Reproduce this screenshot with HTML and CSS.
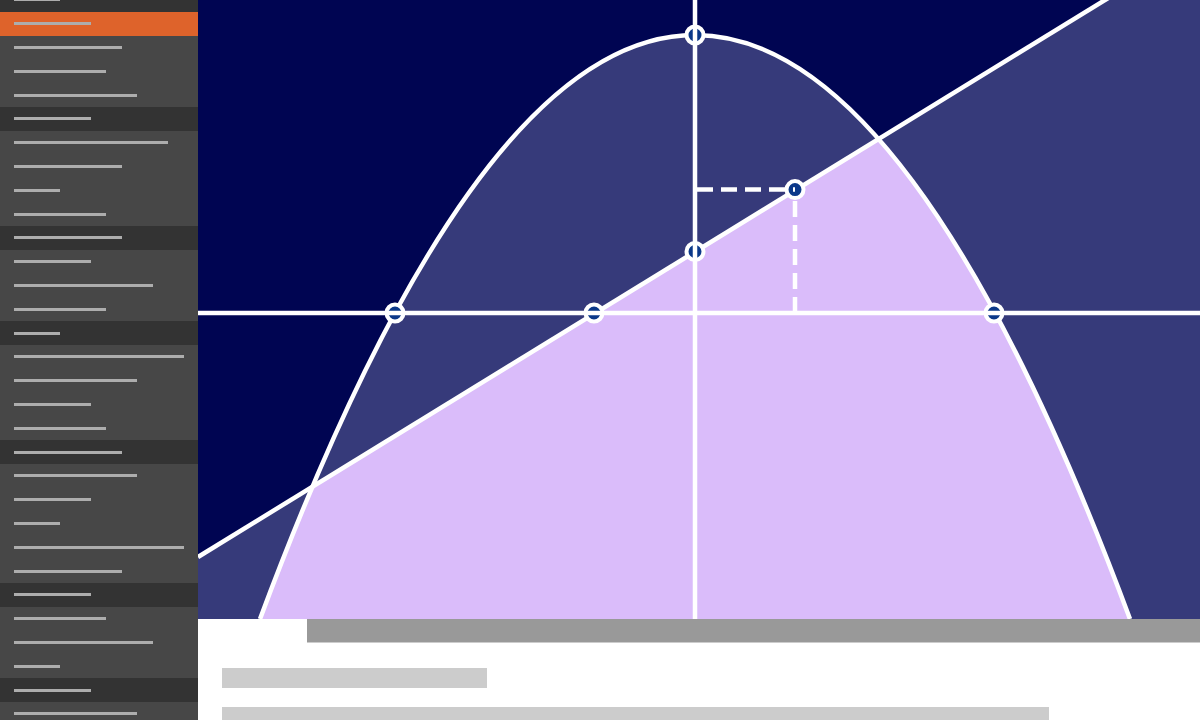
FILE: index.html
```html
<!DOCTYPE html>
<html lang="en">

<head>
  <meta charset="UTF-8">
  <meta name="viewport" content="width=device-width, initial-scale=1.0">
  <title>Quadratic vs Linear</title>
  <link rel="stylesheet" href="styles.css">
</head>

<body>
  <div class="app">
    <aside class="sidebar">
      <ul class="nav">
        <li class="group"><span class="bar s1"></span></li>
        <li class="item active"><span class="bar s2"></span></li>
        <li class="item"><span class="bar s4"></span></li>
        <li class="item"><span class="bar s3"></span></li>
        <li class="item"><span class="bar s5"></span></li>
        <li class="group"><span class="bar s2"></span></li>
        <li class="item"><span class="bar s7"></span></li>
        <li class="item"><span class="bar s4"></span></li>
        <li class="item"><span class="bar s1"></span></li>
        <li class="item"><span class="bar s3"></span></li>
        <li class="group"><span class="bar s4"></span></li>
        <li class="item"><span class="bar s2"></span></li>
        <li class="item"><span class="bar s6"></span></li>
        <li class="item"><span class="bar s3"></span></li>
        <li class="group"><span class="bar s1"></span></li>
        <li class="item"><span class="bar s8"></span></li>
        <li class="item"><span class="bar s5"></span></li>
        <li class="item"><span class="bar s2"></span></li>
        <li class="item"><span class="bar s3"></span></li>
        <li class="group"><span class="bar s4"></span></li>
        <li class="item"><span class="bar s5"></span></li>
        <li class="item"><span class="bar s2"></span></li>
        <li class="item"><span class="bar s1"></span></li>
        <li class="item"><span class="bar s8"></span></li>
        <li class="item"><span class="bar s4"></span></li>
        <li class="group"><span class="bar s2"></span></li>
        <li class="item"><span class="bar s3"></span></li>
        <li class="item"><span class="bar s6"></span></li>
        <li class="item"><span class="bar s1"></span></li>
        <li class="group"><span class="bar s2"></span></li>
        <li class="item"><span class="bar s5"></span></li>
      </ul>
    </aside>

    <main class="content">
      <div class="stage">
        <svg class="plot" width="1002" height="619" viewBox="198 0 1002 619">
          <defs>
            <clipPath id="inside">
              <path d="M260,619 Q695,-549 1130,619 Z" />
            </clipPath>
          </defs>

          <rect x="198" y="0" width="1002" height="619" fill="#000552" />
          <!-- area under the curve and area under the line -->
          <path d="M260,619 Q695,-549 1130,619 Z" fill="#363a7a" />
          <polygon points="198,557 1200,-58.3 1200,619 198,619" fill="#363a7a" />
          <!-- both at once -->
          <polygon points="198,557 1200,-58.3 1200,619 198,619" fill="#dabcfa" clip-path="url(#inside)" />

          <g fill="none" stroke="#fff" stroke-width="4.5">
            <path d="M260,619 Q695,-549 1130,619" />
            <line x1="198" y1="557" x2="1200" y2="-58.3" />
          </g>

          <g fill="#0b3889" stroke="#fff" stroke-width="4">
            <circle cx="695" cy="35" r="8.5" />
            <circle cx="695" cy="251.5" r="8.5" />
            <circle cx="795" cy="189.6" r="8.5" />
            <circle cx="395" cy="313" r="8.5" />
            <circle cx="594" cy="313" r="8.5" />
            <circle cx="994" cy="313" r="8.5" />
          </g>

          <g stroke="#fff" stroke-width="4.5">
            <line x1="198" y1="313" x2="1200" y2="313" />
            <line x1="695" y1="0" x2="695" y2="619" />
          </g>

          <!-- guides to the point on the line -->
          <g stroke="#fff" stroke-width="4.5" stroke-dasharray="16 8">
            <line x1="697" y1="189.6" x2="795" y2="189.6" />
            <line x1="795" y1="201" x2="795" y2="313" />
          </g>
        </svg>
      </div>

      <div class="panel">
        <div class="toolbar"></div>
        <div class="line short"></div>
        <div class="line long"></div>
      </div>
    </main>
  </div>
</body>

</html>
```

FILE: styles.css
```css
body {
  margin: 0;
  font-family: "Liberation Sans", Arial, sans-serif;
  background: #fff;
  overflow: hidden;
}

.app {
  display: flex;
  width: 1200px;
  height: 720px;
  overflow: hidden;
}

.sidebar {
  width: 198px;
  flex-shrink: 0;
  background: #474747;
  overflow: hidden;
}

.nav {
  list-style: none;
  margin: -12px 0 0;
  padding: 0;
}

.nav li {
  height: 23.8px;
  display: flex;
  align-items: center;
  padding-left: 14px;
}

.nav .group {
  background: #333;
}

.nav .active {
  background: #de632b;
}

.bar {
  display: block;
  height: 3px;
  background: #adadad;
}

.s1 { width: 46px; }
.s2 { width: 77px; }
.s3 { width: 92px; }
.s4 { width: 108px; }
.s5 { width: 123px; }
.s6 { width: 139px; }
.s7 { width: 154px; }
.s8 { width: 170px; }

.content {
  flex: 1;
  display: flex;
  flex-direction: column;
}

.stage {
  height: 619px;
  background: #000552;
}

.plot {
  display: block;
}

.panel {
  flex: 1;
  background: #fff;
  padding-left: 24px;
}

.toolbar {
  height: 23px;
  margin-left: 85px;
  background: #999;
  border-bottom: 1px solid #ccc;
}

.line {
  height: 20px;
  background: #ccc;
}

.line.short {
  width: 265px;
  margin-top: 25px;
}

.line.long {
  width: 827px;
  margin-top: 19px;
}
```
